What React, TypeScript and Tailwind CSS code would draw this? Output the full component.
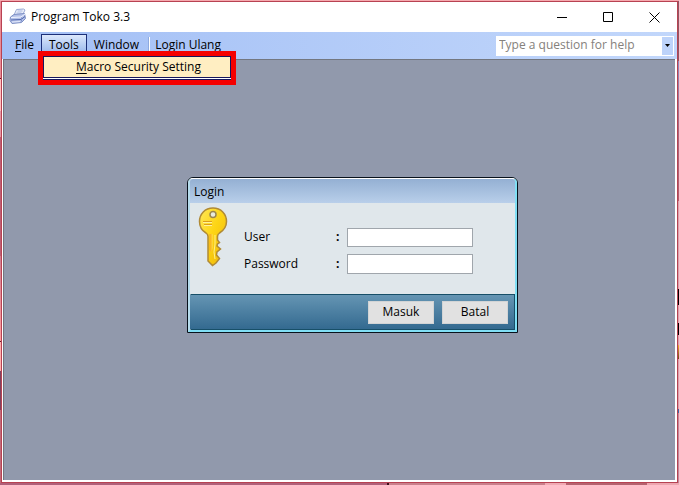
import { useState } from "react";

const menus = ["File", "Tools", "Window"];

function MenuText({ text }: { text: string }) {
  return (
    <span className="whitespace-nowrap">
      <span className="underline underline-offset-2">{text[0]}</span>
      {text.slice(1)}
    </span>
  );
}

function AppIcon() {
  return (
    <svg viewBox="0 0 18 18" className="h-[18px] w-[18px] shrink-0">
      <path d="M5 7 7.500 1.500 14.500 1 16 2 13 8Z" fill="#edf1fb" stroke="#98a8d4" />
      <path d="M8.500 3h5M7.500 5h5" stroke="#a9b7df" />
      <path d="M1.500 9 5 6.500 15.500 5.500 16.500 10.500 12.500 14.500 3 15.500 1 12.500Z" fill="#b4c1e8" stroke="#7d8fc4" />
      <path d="M2 9.500 12 9 16 6" fill="none" stroke="#f2f5ff" />
      <path d="M2 12 12 11.500 16 8.500" fill="none" stroke="#5268ad" />
      <path d="M3 14 11 13.500" stroke="#e4eafa" />
      <path d="M12.500 9.500v4" stroke="#7d90c8" />
    </svg>
  );
}

function KeyIcon() {
  return (
    <svg viewBox="0 0 32 60" className="h-[60px] w-8 shrink-0">
      <defs>
        <linearGradient id="gold" x1="0" y1="0" x2="1" y2="1">
          <stop offset="0" stopColor="#ffe75a" />
          <stop offset="0.450" stopColor="#fdd515" />
          <stop offset="1" stopColor="#edb408" />
        </linearGradient>
        <linearGradient id="shaft" x1="0" y1="0" x2="1" y2="0">
          <stop offset="0" stopColor="#f6a51b" />
          <stop offset="1" stopColor="#ffdf3d" />
        </linearGradient>
      </defs>
      <path
        d="M15 1C7 1 1.500 7 1.500 14.500c0 5 3 9.500 6.500 11.500 1.500 1 2 2 2 3.500V54l4.500 4.500L18 56l3.500-4.500L18.500 48l.5-3 3.500-3-3.500-3 .5-2 2-1.500-2-2.500v-3.500c0-1.500.5-2.500 2-3.500 4-2.500 7-6.500 7-11.500C28.500 7 23 1 15 1Z"
        fill="url(#gold)"
        stroke="#b08a35"
        strokeWidth="1.500"
      />
      <path d="M11.500 27h3.500v14l-2 4-1.500-2Z" fill="url(#shaft)" />
      <path d="M17 28v9l-1 8 1 7" fill="none" stroke="#fff08a" />
      <path d="M5 14.500h9M6 17.500h8" stroke="#dd9d1b" />
      <path d="M5 15.500h9M6 18.500h8" stroke="#fff29a" />
      <circle cx="15" cy="7.500" r="3" fill="#e9ebdf" stroke="#9b874f" strokeWidth="1.500" />
    </svg>
  );
}

function TitleBar() {
  return (
    <header className="flex h-[30px] items-center bg-white pl-[7px] text-black">
      <AppIcon />
      <h1 className="ml-1 flex-1 text-[12px]">Program Toko 3.3</h1>
      <button aria-label="Minimize" className="flex h-[30px] w-[46px] items-center justify-center">
        <svg viewBox="0 0 11 11" className="h-[11px] w-[11px]">
          <path d="M0 5.500h10" stroke="#000" />
        </svg>
      </button>
      <button aria-label="Maximize" className="flex h-[30px] w-[46px] items-center justify-center">
        <svg viewBox="0 0 11 11" className="h-[11px] w-[11px]">
          <path d="M.5.500h9v9h-9z" fill="none" stroke="#000" />
        </svg>
      </button>
      <button aria-label="Close" className="flex h-[30px] w-[46px] items-center justify-center">
        <svg viewBox="0 0 11 11" className="h-[11px] w-[11px]">
          <path d="M.5.500l10 10M10.500.500l-10 10" stroke="#000" />
        </svg>
      </button>
    </header>
  );
}

function MenuBar() {
  const [open, setOpen] = useState("Tools");

  return (
    <nav className="flex h-[27px] items-center bg-linear-to-r from-[#a3bff5] to-[#c2d7fb] pl-[6px] pr-[3px] text-[12px]">
      {menus.map((menu) => (
        <div key={menu} className="relative">
          <button
            onClick={() => setOpen(open === menu ? "" : menu)}
            className={
              open === menu
                ? "flex h-[23px] items-center border border-[#1c2f78] bg-linear-to-b from-[#dce8fc] to-[#8fb0e8] px-[7px] pb-px"
                : "flex h-[23px] items-center border border-transparent px-[6px] pb-px"
            }
          >
            <MenuText text={menu} />
          </button>
          {menu === "Tools" && open === menu && (
            <div className="absolute -left-[3px] top-[17px] z-10 w-[198px] border-[5px] border-[#f50000] bg-white">
              <button className="flex h-[22px] w-full items-center border border-[#16165c] bg-[#ffeec2] pl-8">
                <MenuText text="Macro Security Setting" />
              </button>
              <div className="h-[2px] border-b border-[#16165c]" />
            </div>
          )}
        </div>
      ))}
      <div className="ml-[2px] h-[18px] w-[2px] border-l border-r border-l-[#8eaae0] border-r-white" />
      <button className="flex h-[23px] items-center px-[5px] pb-px">
        <MenuText text="Login Ulang" />
      </button>
      <div className="ml-auto flex h-5 w-[178px] border border-white bg-white">
        <input
          aria-label="Help question"
          placeholder="Type a question for help"
          className="min-w-0 flex-1 bg-white px-[2px] pb-[2px] text-[12px] outline-none placeholder:text-[#85817c]"
        />
        <button aria-label="Show recent questions" className="flex w-[11px] items-center justify-center bg-[#bdd3fa]">
          <svg viewBox="0 0 5 3" className="h-[3px] w-[5px]">
            <path d="M0 0h5L2.500 3Z" fill="#000" />
          </svg>
        </button>
      </div>
    </nav>
  );
}

function LoginDialog() {
  const [user, setUser] = useState("");
  const [password, setPassword] = useState("");

  return (
    <form
      onSubmit={(e) => e.preventDefault()}
      className="absolute left-[183px] top-[117px] w-[331px] rounded-t-md border border-[#08121c] bg-[#e0e7eb] text-[12px]"
    >
      <div className="rounded-t-[5px] border-2 border-t border-[#80dff5] border-l-[#b5dcec] border-t-white">
        <h2 className="flex h-6 items-center rounded-t-[3px] bg-linear-to-b from-[#94b0d3] to-[#b9cfea] pl-1 pt-px">
          Login
        </h2>
        <div className="flex h-[91px] pl-2 pt-1">
          <KeyIcon />
          <div className="ml-[14px] flex flex-col gap-[7px] pt-5">
            <div className="flex h-5 items-center">
              <label htmlFor="user" className="w-[92px]">
                User
              </label>
              <span className="w-[11px] font-bold">:</span>
              <input
                id="user"
                value={user}
                onChange={(e) => setUser(e.target.value)}
                className="h-[19px] w-[126px] border border-[#a0a6ac] bg-white px-1 outline-none"
              />
            </div>
            <div className="flex h-5 items-center">
              <label htmlFor="password" className="w-[92px]">
                Password
              </label>
              <span className="w-[11px] font-bold">:</span>
              <input
                id="password"
                type="password"
                value={password}
                onChange={(e) => setPassword(e.target.value)}
                className="h-5 w-[126px] border border-[#a0a6ac] bg-white px-1 outline-none"
              />
            </div>
          </div>
        </div>
        <div className="flex h-9 items-center justify-end gap-2 border border-[#174f68] border-l-transparent bg-linear-to-b from-[#6595b3] to-[#336a90] pr-[6px]">
          <button type="submit" className="h-[23px] w-[66px] border border-[#d2d4d5] bg-[#e1e1e1]">
            Masuk
          </button>
          <button type="button" className="h-[23px] w-[66px] border border-[#d2d4d5] bg-[#e1e1e1]">
            Batal
          </button>
        </div>
      </div>
    </form>
  );
}

// slivers of the desktop that show around the window
function LeftEdge() {
  return (
    <div className="flex w-px flex-col">
      <div className="h-[77px] bg-[#e98c96]" />
      <div className="h-px bg-[#5e1620]" />
      <div className="h-8 bg-[#ffc0bf]" />
      <div className="h-[26px] bg-[#e598a5]" />
      <div className="h-[119px] bg-[#bd5f74]" />
      <div className="h-[85px] bg-linear-to-b from-[#cf7f92] to-[#ff9fa0]" />
      <div className="h-px bg-[#5e1620]" />
      <div className="h-[29px] bg-[#ffb0ae]" />
      <div className="h-[39px] bg-[#7f4460]" />
      <div className="flex-1 bg-[#c06b7b]" />
    </div>
  );
}

function RightEdge() {
  return (
    <div className="flex w-px flex-col">
      <div className="h-[60px] bg-[#8f5966]" />
      <div className="h-[140px] bg-linear-to-b from-[#8d8dc0] via-[#a66b82] to-[#b0606f]" />
      <div className="h-[88px] bg-[#d5a3ad]" />
      <div className="h-4 bg-black" />
      <div className="h-[18px] bg-[#d5a3ad]" />
      <div className="h-3 bg-black" />
      <div className="h-[10px] bg-[#d5a3ad]" />
      <div className="h-[14px] bg-linear-to-b from-[#f5b02e] to-[#6b4a1c]" />
      <div className="h-[50px] bg-[#d5a3ad]" />
      <div className="h-1 bg-[#3a68a8]" />
      <div className="flex-1 bg-[#bd8b9c]" />
    </div>
  );
}

export default function App() {
  return (
    <div className="flex min-h-screen flex-col font-['Open_Sans','Noto_Sans',sans-serif] text-black">
      <div className="h-px bg-[#f5a9ae]" />
      <div className="flex flex-1">
        <LeftEdge />
        <div className="flex flex-1 flex-col border border-[#b84252] bg-white">
          <TitleBar />
          <MenuBar />
          <main className="relative mb-[2px] ml-px mr-[2px] flex-1 border-l border-t border-[#737780] bg-[#9199ac]">
            <LoginDialog />
          </main>
        </div>
        <RightEdge />
      </div>
      <div className="flex h-[2px]">
        <div className="w-[57%] bg-[#b0607a]" />
        <div className="w-[2px] bg-[#3a0f1a]" />
        <div className="w-[23%] bg-[#c9808c]" />
        <div className="w-[3%] bg-[#f0aab4]" />
        <div className="w-[12%] bg-[#b5626f]" />
        <div className="flex-1 bg-[#eda6b0]" />
      </div>
    </div>
  );
}
